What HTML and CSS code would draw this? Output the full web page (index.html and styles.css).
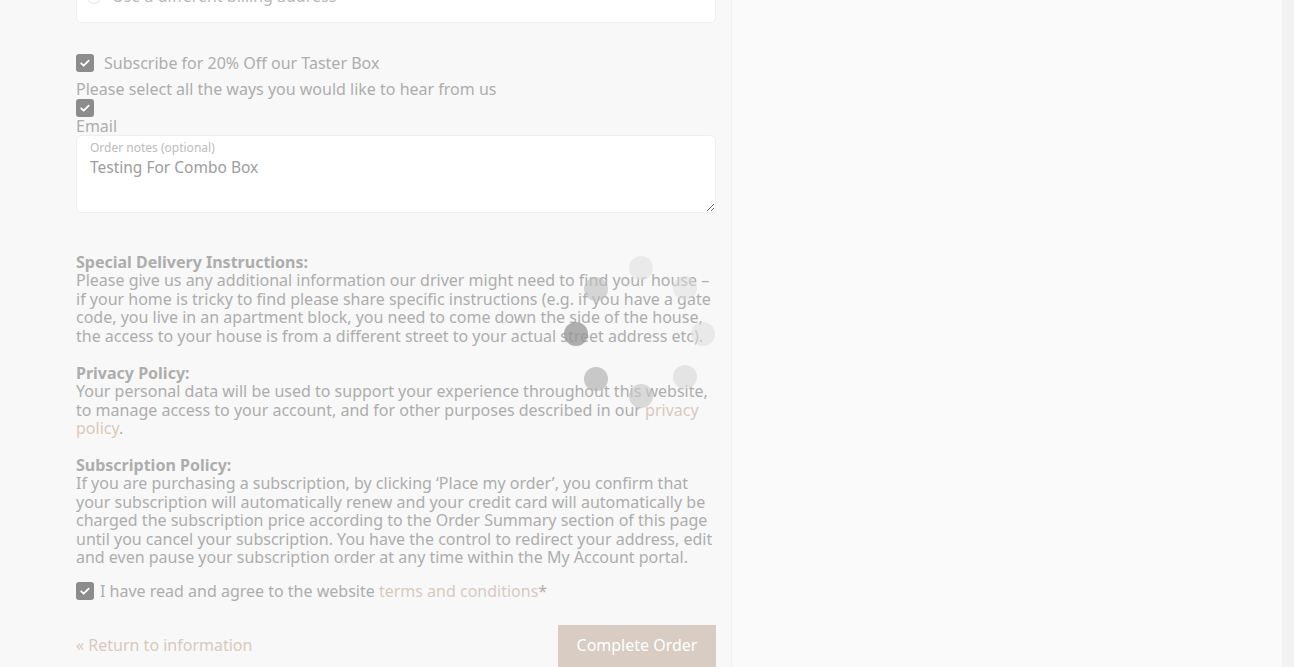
FILE: index.html
```html
<!DOCTYPE html>
<html lang="en">
<head>
<meta charset="utf-8">
<title>Checkout</title>
<link rel="stylesheet" href="styles.css">
</head>
<body>
<div class="page">
  <main class="main">
    <div class="billing-box">
      <label class="radio-row"><span class="radio"></span><span>Use a different billing address</span></label>
    </div>

    <label class="check-row subscribe">
      <span class="checkbox"><svg viewBox="0 0 18 18" width="18" height="18"><path d="M5.2 9.3l2.5 2.4 5-5" fill="none" stroke="#fff" stroke-width="1.8" stroke-linecap="round" stroke-linejoin="round"/></svg></span>
      <span>Subscribe for 20% Off our Taster Box</span>
    </label>
    <p class="hear">Please select all the ways you would like to hear from us</p>
    <span class="checkbox solo"><svg viewBox="0 0 18 18" width="18" height="18"><path d="M5.2 9.3l2.5 2.4 5-5" fill="none" stroke="#fff" stroke-width="1.8" stroke-linecap="round" stroke-linejoin="round"/></svg></span>
    <p class="email">Email</p>

    <div class="notes">
      <span class="notes-label">Order notes (optional)</span>
      <textarea class="notes-input">Testing For Combo Box</textarea>
    </div>

    <div class="policies">
      <p><strong>Special Delivery Instructions:</strong><br>Please give us any additional information our driver might need to find your house –<br>if your home is tricky to find please share specific instructions (e.g. if you have a gate<br>code, you live in an apartment block, you need to come down the side of the house,<br>the access to your house is from a different street to your actual street address etc).</p>
      <p><strong>Privacy Policy:</strong><br>Your personal data will be used to support your experience throughout this website,<br>to manage access to your account, and for other purposes described in our <a href="#" class="link">privacy<br>policy</a>.</p>
      <p><strong>Subscription Policy:</strong><br>If you are purchasing a subscription, by clicking ‘Place my order’, you confirm that<br>your subscription will automatically renew and your credit card will automatically be<br>charged the subscription price according to the Order Summary section of this page<br>until you cancel your subscription. You have the control to redirect your address, edit<br>and even pause your subscription order at any time within the My Account portal.</p>
    </div>

    <label class="check-row terms">
      <span class="checkbox"><svg viewBox="0 0 18 18" width="18" height="18"><path d="M5.2 9.3l2.5 2.4 5-5" fill="none" stroke="#fff" stroke-width="1.8" stroke-linecap="round" stroke-linejoin="round"/></svg></span>
      <span>I have read and agree to the website <a href="#" class="link">terms and conditions</a>*</span>
    </label>

    <div class="actions">
      <a href="#" class="link back">« Return to information</a>
      <button class="complete">Complete Order</button>
    </div>

    <div class="spinner">
      <span class="dot d1"></span>
      <span class="dot d2"></span>
      <span class="dot d3"></span>
      <span class="dot d4"></span>
      <span class="dot d5"></span>
      <span class="dot d6"></span>
      <span class="dot d7"></span>
      <span class="dot d8"></span>
    </div>
  </main>
  <aside class="side"></aside>
  <div class="scrollbar"></div>
</div>
</body>
</html>
```

FILE: styles.css
```css
* { box-sizing: border-box; }
html, body { margin: 0; padding: 0; height: 100%; overflow: hidden; }
body {
  font-family: "Noto Sans", "DejaVu Sans", sans-serif;
  font-size: 16px;
  color: #adadad;
  background: #f8f8f8;
}
.page { display: flex; height: 667px; }
.main {
  position: relative;
  width: 732px;
  padding: 0 16px 0 76px;
  background: #f8f8f8;
  border-right: 1px solid #f2f2f2;
  display: flex;
  flex-direction: column;
  align-items: flex-start;
}
.main > * { flex-shrink: 0; }
.side { flex: 1; background: #fafafa; }
.scrollbar { width: 12px; background: #f2f2f2; }

.billing-box {
  width: 640px;
  height: 52px;
  margin-top: -29px;
  background: #fff;
  border: 1px solid #efefef;
  border-radius: 5px;
  padding: 15px 10px 0 9px;
}
.radio-row { display: flex; align-items: center; gap: 10px; color: #b8b8b8; line-height: 18px; }
.radio { width: 16px; height: 16px; border: 1px solid #e4e4e4; border-radius: 50%; background: #fff; }

.checkbox {
  width: 18px; height: 18px;
  border-radius: 3px;
  background: #8c8c8c;
  display: inline-flex;
  flex: none;
}
.check-row { display: flex; align-items: center; gap: 10px; line-height: 18px; }
.subscribe { margin-top: 31px; }
.hear { margin: 7px 0 0 0; line-height: 20px; }
.email { margin: 0; line-height: 18px; }

.notes {
  position: relative;
  width: 640px;
  height: 78px;
  background: #fff;
  border: 1px solid #efefef;
  border-radius: 5px;
  display: flex;
}
.notes-label {
  position: absolute;
  left: 13px; top: 5px;
  font-size: 12px;
  color: #bcbcbc;
  line-height: 14px;
}
.notes-input {
  flex: 1;
  border: none;
  outline: none;
  background: transparent;
  resize: vertical;
  padding: 22px 13px 0;
  font-family: inherit;
  font-size: 15.5px;
  line-height: 18px;
  color: #9d9d9d;
}

.policies { margin-top: 40px; width: 660px; }
.policies p { margin: 0 0 18.45px 0; line-height: 18.45px; white-space: nowrap; }
.policies strong { font-weight: 700; }
.link { color: #dac9bb; text-decoration: none; }

.terms { margin-top: -4px; gap: 6px; line-height: 20px; }

.actions {
  width: 640px;
  margin-top: 24px;
  display: flex;
  justify-content: space-between;
  align-items: flex-start;
}
.back { margin-top: 11px; line-height: 18px; }
.complete {
  width: 158px;
  height: 48px;
  border: none;
  background: #d9ccc2;
  color: #fff;
  font-family: inherit;
  font-size: 16px;
  padding: 0 0 8px 0;
}

.spinner {
  position: absolute;
  left: 629px; top: 256px;
  width: 24px; height: 24px;
}
.dot {
  position: absolute;
  width: 24px; height: 24px;
  border-radius: 50%;
}
.d1 { left: 0; top: 0; background: rgba(225,225,225,0.6); }
.d2 { left: 44px; top: 20px; background: rgba(220,220,220,0.5); }
.d3 { left: 62px; top: 66px; background: rgba(220,220,220,0.55); }
.d4 { left: 44px; top: 109px; background: rgba(215,215,215,0.6); }
.d5 { left: 0; top: 128px; background: rgba(200,200,200,0.65); }
.d6 { left: -45px; top: 111px; background: rgba(180,180,180,0.7); }
.d7 { left: -65px; top: 66px; background: rgba(150,150,150,0.75); }
.d8 { left: -45px; top: 21px; background: rgba(190,190,190,0.6); }
```
